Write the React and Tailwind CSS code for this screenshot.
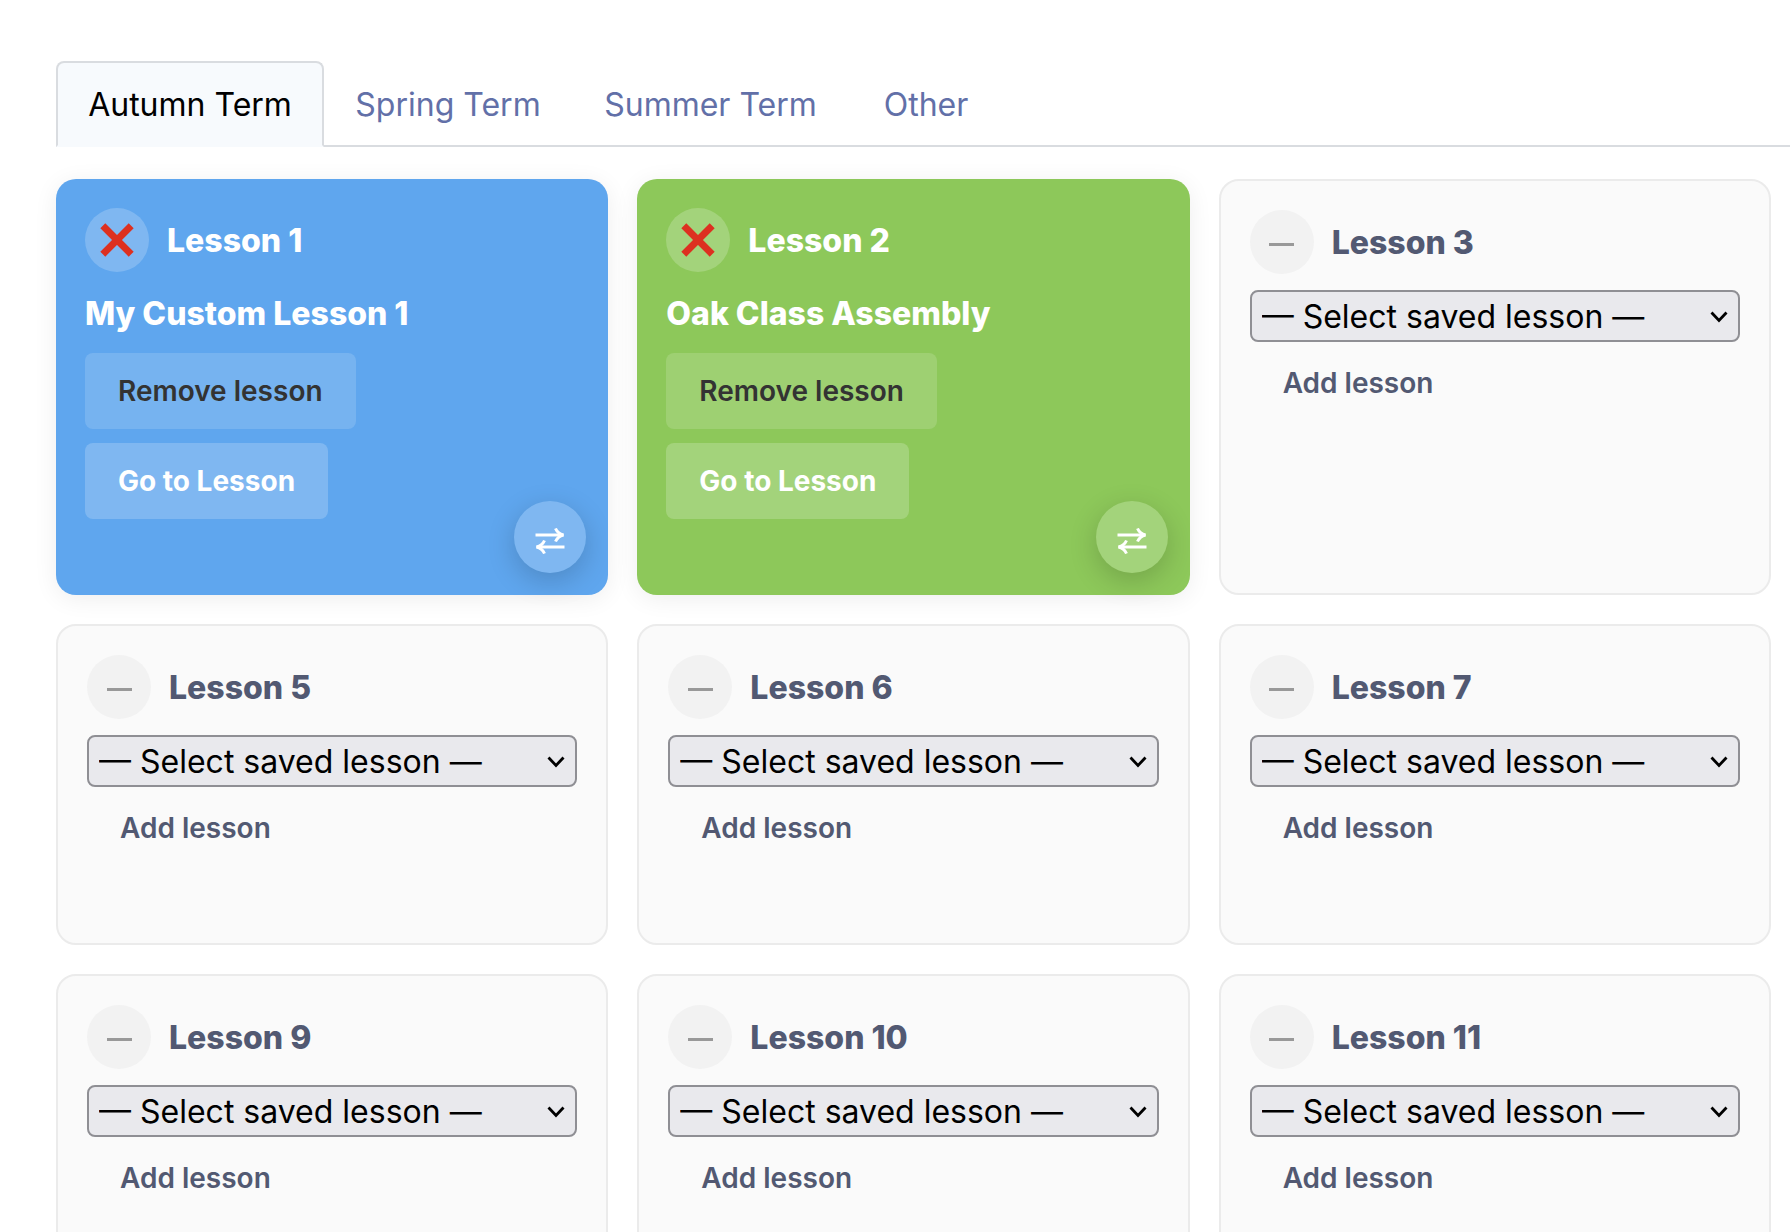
import React, { useState } from "react";

const TABS = [
  { label: "Autumn Term", width: "w-[268px]" },
  { label: "Spring Term", width: "w-[248px]" },
  { label: "Summer Term", width: "w-[277px]" },
  { label: "Other", width: "w-[154px]" },
];

const LESSONS = [
  { number: 1, title: "My Custom Lesson 1", color: "bg-[#5fa6ee]" },
  { number: 2, title: "Oak Class Assembly", color: "bg-[#8dc85a]" },
  { number: 3 },
  { number: 5 },
  { number: 6 },
  { number: 7 },
  { number: 9 },
  { number: 10 },
  { number: 11 },
];

function CrossIcon() {
  return (
    <svg viewBox="0 0 34 34" className="size-[34px]" aria-hidden="true">
      <path d="M2.8 2.8 L31.2 31.2 M31.2 2.8 L2.8 31.2" stroke="#dd3020" strokeWidth="7" fill="none" />
    </svg>
  );
}

function SwapIcon() {
  return (
    <svg
      viewBox="0 0 30 26"
      className="mt-2 h-[26px] w-[30px]"
      fill="none"
      stroke="white"
      strokeWidth="3"
      aria-hidden="true"
    >
      <path d="M0.5 7 H26" />
      <path d="M4 19 H29.5" />
      <path d="M20.5 0.5 C22 4 24.5 6 28.5 7 C24.5 8 22 10 20.5 13.5" />
      <path d="M9.5 12.5 C8 16 5.5 18 1.5 19 C5.5 20 8 22 9.5 25.5" />
    </svg>
  );
}

function FilledCard({ lesson }) {
  return (
    <article
      className={`relative flex min-h-[416px] flex-col items-start gap-[14px] rounded-[20px] p-[29px] text-white shadow-[0_4px_24px_rgba(0,0,0,0.07)] ${lesson.color}`}
    >
      <header className="flex items-center gap-[18px]">
        <span className="flex size-16 items-center justify-center rounded-full bg-white/20">
          <CrossIcon />
        </span>
        <h2 className="pt-0.5 text-[32px] leading-10 font-extrabold">Lesson {lesson.number}</h2>
      </header>
      <p className="pt-0.5 text-[32px] leading-[51px] font-extrabold">{lesson.title}</p>
      <button type="button" className="h-[76px] rounded-lg bg-white/15 px-[33px] text-[28px] font-semibold text-[#333]">
        Remove lesson
      </button>
      <button type="button" className="h-[76px] rounded-lg bg-white/20 px-[33px] text-[28px] font-bold">
        Go to Lesson
      </button>
      <button
        type="button"
        aria-label={`Swap lesson ${lesson.number}`}
        className="absolute right-[22px] bottom-[22px] flex size-[72px] items-center justify-center rounded-full bg-white/20 shadow-[0_8px_28px_rgba(0,0,0,0.18)]"
      >
        <SwapIcon />
      </button>
    </article>
  );
}

function EmptyCard({ lesson }) {
  const id = `lesson-${lesson.number}`;
  return (
    <article className="flex min-h-[321px] flex-col items-start gap-4 rounded-[20px] border-2 border-[#ebebeb] bg-[#fafafa] p-[29px] text-[#525972]">
      <header className="flex items-center gap-[18px]">
        <span className="flex size-16 items-center justify-center rounded-full bg-[#f2f2f2]">
          <span className="mt-1 h-[3px] w-[25px] bg-[#999]" />
        </span>
        <h2 className="pt-0.5 text-[32px] leading-10 font-extrabold">
          <label htmlFor={id}>Lesson {lesson.number}</label>
        </h2>
      </header>
      <div className="relative w-full">
        <select
          id={id}
          className="block h-[52px] w-full appearance-none rounded-lg border-2 border-[#8f8f94] bg-[#e9e9ed] pt-px pl-[10px] text-[32px] leading-10 text-black"
        >
          <option>— Select saved lesson —</option>
        </select>
        <svg
          viewBox="0 0 18 12"
          className="pointer-events-none absolute top-[21px] right-3 h-3 w-[18px]"
          fill="none"
          stroke="black"
          strokeWidth="2.8"
          aria-hidden="true"
        >
          <path d="M1.5 1.5 L9 9.5 L16.5 1.5" />
        </svg>
      </div>
      <button type="button" className="h-[50px] px-[33px] text-[28px] font-semibold">
        Add lesson
      </button>
    </article>
  );
}

export default function App() {
  const [active, setActive] = useState(0);
  return (
    <main className="h-screen overflow-hidden bg-white pt-[61px] pl-14 font-['Inter',sans-serif]">
      <nav className="flex border-b-2 border-[#d9dce0]" role="tablist">
        {TABS.map((tab, i) => (
          <button
            key={tab.label}
            type="button"
            role="tab"
            aria-selected={i === active}
            onClick={() => setActive(i)}
            className={`-mb-0.5 h-[86px] rounded-t-lg border-2 pt-0.5 text-[32px] ${tab.width} ${
              i === active
                ? "border-[#d9dce0] border-b-[#f7fafd] bg-[#f7fafd] text-black"
                : "border-transparent text-[#6270a8]"
            }`}
          >
            {tab.label}
          </button>
        ))}
      </nav>
      <section className="mt-8 mr-[19px] grid grid-cols-3 gap-[29px]">
        {LESSONS.map((lesson) =>
          lesson.title ? (
            <FilledCard key={lesson.number} lesson={lesson} />
          ) : (
            <EmptyCard key={lesson.number} lesson={lesson} />
          )
        )}
      </section>
    </main>
  );
}
